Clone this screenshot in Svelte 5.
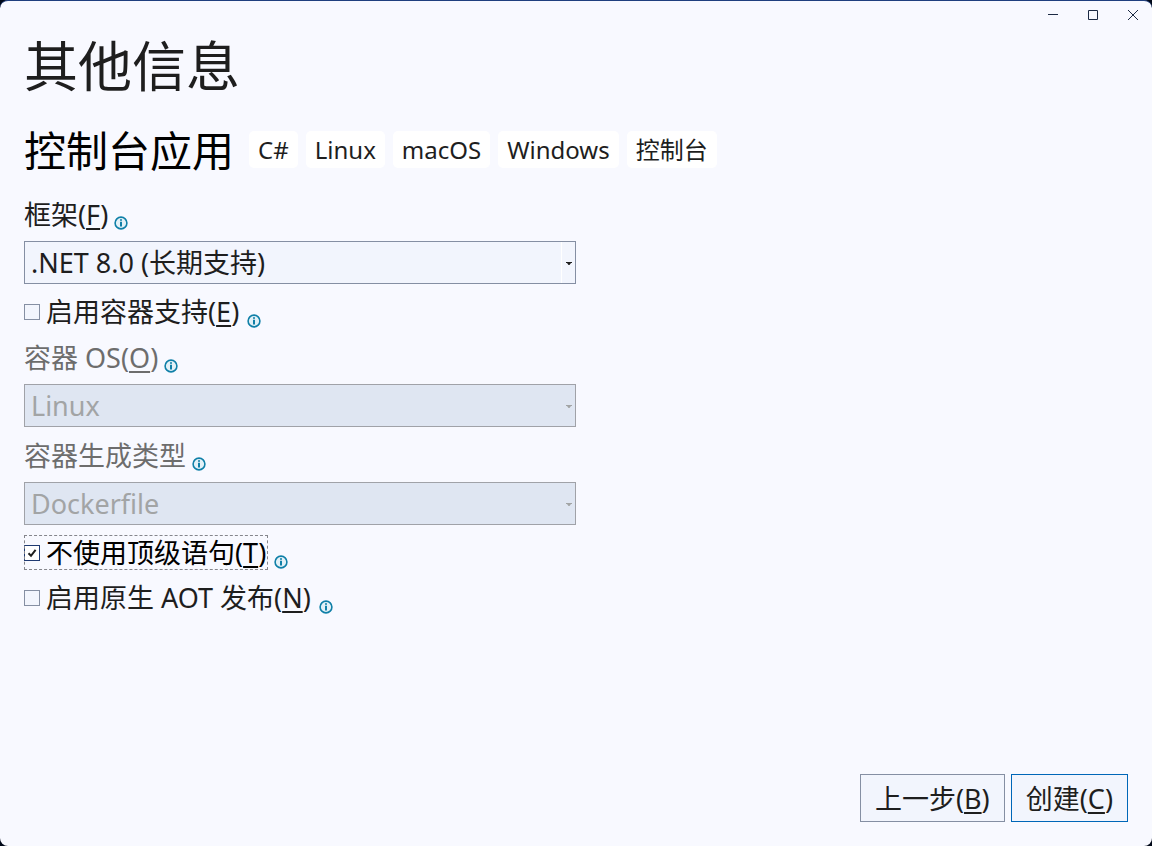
<script>
  let framework = $state('.NET 8.0 (长期支持)');
  let containers = $state(false);
  let noTopLevel = $state(true);
  let nativeAot = $state(false);
  const tags = ['C#', 'Linux', 'macOS', 'Windows', '控制台'];
</script>

{#snippet info()}
  <svg class="info" viewBox="0 0 14 14" aria-hidden="true">
    <circle cx="7" cy="7" r="5.9" fill="#e3f1f7" stroke="#1080a8" stroke-width="1.6" />
    <path d="M6 3.2h2v1.6H6zM6 5.8h2v4.8H6z" fill="#1080a8" />
  </svg>
{/snippet}

{#snippet arrow()}
  <svg class="arrow" viewBox="0 0 13 41" aria-hidden="true">
    <path d="M4 20h6v1H9L7.5 23h-1L5 21H4z" fill="currentColor" />
  </svg>
{/snippet}

<main>
  <div class="controls">
    <button aria-label="最小化"><svg viewBox="0 0 12 12"><path d="M1 5.5h10" /></svg></button>
    <button aria-label="最大化"><svg viewBox="0 0 12 12"><path d="M1.5 1.5h9v9h-9z" /></svg></button>
    <button aria-label="关闭"><svg viewBox="0 0 12 12"><path d="M1 1l10 10M11 1L1 11" /></svg></button>
  </div>

  <h1>其他信息</h1>

  <div class="project">
    <h2>控制台应用</h2>
    <ul>
      {#each tags as tag}
        <li>{tag}</li>
      {/each}
    </ul>
  </div>

  <form onsubmit={(e) => e.preventDefault()}>
    <div class="field">
      <div class="caption"><label for="framework">框架(<u>F</u>)</label>{@render info()}</div>
      <div class="combo">
        <select id="framework" bind:value={framework}><option>.NET 8.0 (长期支持)</option></select>
        {@render arrow()}
      </div>
    </div>

    <div class="check">
      <label><input type="checkbox" bind:checked={containers} /><span>启用容器支持(<u>E</u>)</span></label>{@render info()}
    </div>

    <div class="field off">
      <div class="caption"><label for="os">容器 OS(<u>O</u>)</label>{@render info()}</div>
      <div class="combo">
        <select id="os" disabled><option>Linux</option></select>
        {@render arrow()}
      </div>
    </div>

    <div class="field off">
      <div class="caption"><label for="build">容器生成类型</label>{@render info()}</div>
      <div class="combo">
        <select id="build" disabled><option>Dockerfile</option></select>
        {@render arrow()}
      </div>
    </div>

    <div class="check">
      <label class="focused"><input type="checkbox" bind:checked={noTopLevel} /><span>不使用顶级语句(<u>T</u>)</span></label>{@render info()}
    </div>

    <div class="check">
      <label><input type="checkbox" bind:checked={nativeAot} /><span>启用原生 AOT 发布(<u>N</u>)</span></label>{@render info()}
    </div>
  </form>

  <footer>
    <button>上一步(<u>B</u>)</button>
    <button class="primary">创建(<u>C</u>)</button>
  </footer>
</main>

<style>
  :global(body) {
    background: #000818;
  }
  main {
    box-sizing: border-box;
    min-height: 100vh;
    display: flex;
    flex-direction: column;
    padding: 0 24px 24px;
    border-top: 1px solid #1f3f7f;
    border-radius: 8px;
    background: #f8f9ff;
    color: #1e1e1e;
    font: 27px/35px 'Noto Sans', 'Noto Sans CJK SC', sans-serif;
  }
  button,
  select {
    font: inherit;
    color: inherit;
    border-radius: 0;
    margin: 0;
  }
  .controls {
    display: flex;
    justify-content: flex-end;
    margin-right: -25px;
  }
  .controls button {
    display: grid;
    place-items: center;
    width: 40px;
    height: 28px;
    padding: 0;
    border: 0;
    background: none;
  }
  .controls svg {
    width: 12px;
    height: 12px;
    fill: none;
    stroke: #1c2a44;
  }
  h1,
  h2 {
    margin: 0;
    font-weight: 400;
  }
  h1 {
    font-size: 54px;
    line-height: 75px;
  }
  .project {
    display: flex;
    flex-wrap: wrap;
    align-items: center;
    gap: 15px;
    margin: 16px 0 14px;
  }
  h2 {
    color: #000;
    font-size: 42px;
    line-height: 62px;
  }
  ul {
    display: flex;
    flex-wrap: wrap;
    gap: 8px;
    margin: 0 0 4px;
    padding: 0;
    list-style: none;
  }
  li {
    padding: 0 9px;
    border-radius: 5px;
    background: #fff;
    font-size: 24px;
    line-height: 37px;
  }
  form {
    display: flex;
    flex-direction: column;
    gap: 10px;
    width: 50%;
  }
  .caption,
  .check {
    display: flex;
    align-items: flex-end;
    gap: 6px;
    white-space: nowrap;
  }
  .caption {
    margin-bottom: 8px;
    line-height: 37px;
  }
  u {
    text-decoration-thickness: 2px;
    text-underline-offset: 3px;
  }
  .info {
    flex: none;
    width: 14px;
    height: 14px;
    margin-bottom: 3px;
  }
  .check .info {
    margin-bottom: 1px;
  }
  .combo {
    display: grid;
  }
  .combo > * {
    grid-area: 1 / 1;
  }
  select {
    box-sizing: border-box;
    width: 100%;
    height: 43px;
    padding: 0 20px 0 6px;
    border: 1px solid #858fa3;
    background: #f2f5fd;
    appearance: none;
  }
  .arrow {
    justify-self: end;
    align-self: center;
    width: 13px;
    height: 41px;
    margin-right: 1px;
    box-sizing: border-box;
    pointer-events: none;
    box-shadow: -1px 0 #fff;
  }
  .off label {
    color: #6d6d6d;
  }
  .off select {
    border-color: #a0a2a8;
    background: #dfe6f2;
    color: #a2a4a5;
    opacity: 1;
  }
  .off .arrow {
    color: #a2a4a5;
    box-shadow: none;
  }
  .check label {
    display: flex;
    align-items: center;
    gap: 6px;
    padding-right: 2px;
  }
  .focused {
    color: #000;
    outline: 1px dashed #85868c;
    outline-offset: -1px;
  }
  input {
    flex: none;
    width: 16px;
    height: 16px;
    margin: 0;
    border: 1px solid #858fa3;
    background: #f2f5fd;
    appearance: none;
  }
  input:checked {
    border-color: #1f3a72;
    background: #fff url("data:image/svg+xml,%3Csvg xmlns='http://www.w3.org/2000/svg' viewBox='0 0 14 14'%3E%3Cpath d='M3.5 7.2L6 9.8 10.6 3.8' fill='none' stroke='%231e1e1e' stroke-width='2'/%3E%3C/svg%3E");
  }
  footer {
    display: flex;
    justify-content: flex-end;
    gap: 6px;
    margin-top: auto;
  }
  footer button {
    height: 48px;
    padding: 0 14px;
    border: 1px solid #858fa3;
    background: #f2f5fd;
  }
  footer .primary {
    border: 1px solid #0067b8;
  }
</style>
